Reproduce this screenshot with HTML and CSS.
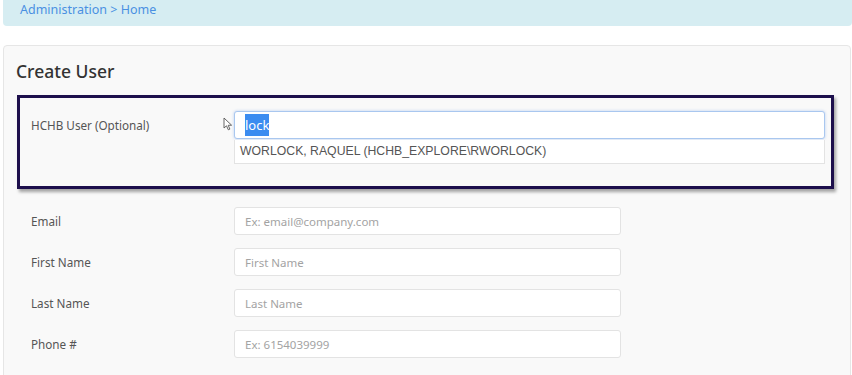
FILE: index.html
```html
<!DOCTYPE html>
<html>
<head>
    <title>Create User</title>
    <link rel="stylesheet" href="styles.css">
</head>
<body>
    <div class="breadcrumb">
        <a href="#">Administration</a> &gt; <a href="#">Home</a>
    </div>

    <div class="card">
        <h2>Create User</h2>

        <div class="lookup-box">
            <div class="form-row">
                <label>HCHB User (Optional)</label>
                <div class="lookup">
                    <svg class="pointer" width="10" height="14" viewBox="0 0 10 14">
                        <path d="M1 1 L1 11 L3.5 8.8 L5.3 12.8 L6.9 12.1 L5.2 8.3 L8.6 8.2 Z" fill="#fff" stroke="#555" stroke-width="0.9" stroke-linejoin="round"/>
                    </svg>
                    <div class="input focused"><span class="selected">lock</span></div>
                    <div class="suggestions">
                        <div class="suggestion">WORLOCK, RAQUEL (HCHB_EXPLORE\RWORLOCK)</div>
                    </div>
                </div>
            </div>
        </div>

        <div class="fields">
            <div class="form-row">
                <label>Email</label>
                <input type="text" placeholder="Ex: email@company.com">
            </div>
            <div class="form-row">
                <label>First Name</label>
                <input type="text" placeholder="First Name">
            </div>
            <div class="form-row">
                <label>Last Name</label>
                <input type="text" placeholder="Last Name">
            </div>
            <div class="form-row">
                <label>Phone #</label>
                <input type="text" placeholder="Ex: 6154039999">
            </div>
        </div>
    </div>
</body>
</html>
```

FILE: styles.css
```css
body {
    margin: 0;
    background: #fff;
    font-family: 'Noto Sans', 'Open Sans', sans-serif;
    color: #555;
}
.breadcrumb {
    margin: 0 0 0 3px;
    height: 26px;
    padding: 0 17px;
    background: #d6edf2;
    border-radius: 0 0 4px 4px;
    font-size: 12.5px;
    line-height: 19px;
    color: #4a90e2;
}
.breadcrumb a {
    color: #4a90e2;
    text-decoration: none;
}
.card {
    margin: 19px 1px 0 3px;
    height: 400px;
    background: #f9f9f9;
    border: 1px solid #e6e6e6;
    border-radius: 4px;
}
.card h2 {
    margin: 0;
    padding: 13px 12px 0;
    height: 23px;
    font-size: 17.5px;
    font-weight: 500;
    line-height: 24px;
    color: #333;
}
.lookup-box {
    margin: 13px 16px 0 13px;
    padding: 13px 6px 0 11px;
    border: 3px solid #1d0f4c;
    box-shadow: 2px 3px 3px rgba(0,0,0,0.35);
    box-sizing: border-box;
    height: 94px;
}
.form-row {
    display: flex;
    align-items: flex-start;
}
.form-row label {
    width: 203px;
    flex-shrink: 0;
    font-size: 11.7px;
    line-height: 28px;
    color: #555;
}
.lookup {
    position: relative;
    flex: 1;
}
.pointer {
    position: absolute;
    left: -11px;
    top: 6px;
}
.input, input {
    box-sizing: border-box;
    height: 28px;
    background: #fff;
    border: 1px solid #e3e3e3;
    border-radius: 3px;
    padding: 0 10px;
    font-family: 'Noto Sans', 'Open Sans', sans-serif;
    font-size: 11.5px;
    color: #555;
}
.input.focused {
    border-color: #a9c7ef;
    box-shadow: 0 0 3px rgba(102,150,230,0.45);
    line-height: 26px;
}
.selected {
    background: #3b8cf0;
    color: #fff;
    padding: 2px 0;
    font-size: 13px;
}
.suggestions {
    margin-top: 1px;
    background: #fff;
    border: 1px solid #e3e3e3;
    border-top: none;
}
.suggestion {
    height: 23px;
    padding: 0 5px;
    font-family: 'Liberation Sans', Arial, sans-serif;
    font-size: 12.25px;
    line-height: 23px;
    color: #555;
}
.fields {
    display: flex;
    flex-direction: column;
    gap: 13px;
    margin: 18px 0 0 27px;
}
input {
    width: 387px;
}
input::placeholder {
    color: #a3a3a3;
}
```
